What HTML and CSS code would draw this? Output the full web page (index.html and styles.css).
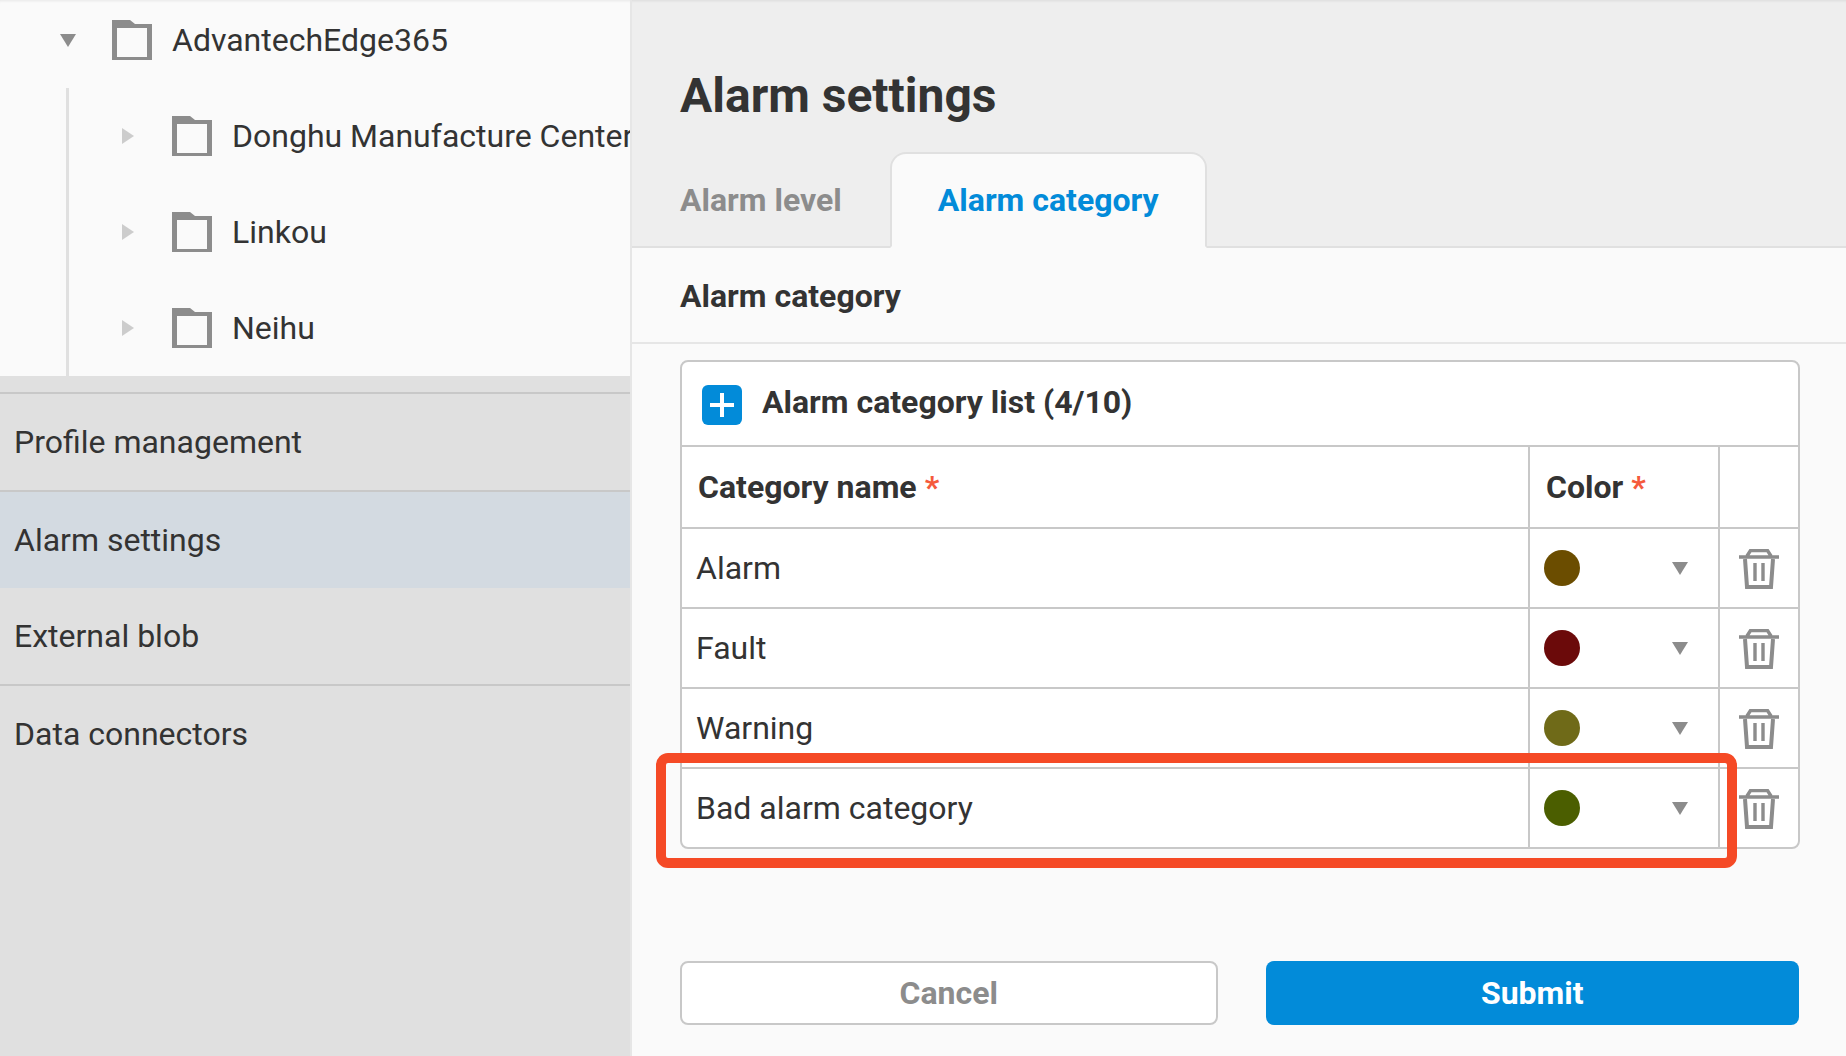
FILE: index.html
```html
<!DOCTYPE html>
<html lang="en">
<head>
  <meta charset="UTF-8" />
  <title>Alarm settings</title>
  <link rel="stylesheet" href="styles.css">
</head>
<body>

  <!-- Sidebar -->
  <aside class="sidebar">
    <div class="tree">
      <div class="tree-row root">
        <span class="caret-down"></span>
        <svg class="folder" viewBox="0 0 40 40"><path d="M0 0h18l5 4h17v36H0zM5 8v29h30V8z" fill="#8c8c8c" fill-rule="evenodd"/></svg>
        <span class="tree-label">AdvantechEdge365</span>
      </div>
      <div class="tree-children">
        <div class="tree-row">
          <span class="caret-right"></span>
          <svg class="folder" viewBox="0 0 40 40"><path d="M0 0h18l5 4h17v36H0zM5 8v29h30V8z" fill="#8c8c8c" fill-rule="evenodd"/></svg>
          <span class="tree-label">Donghu Manufacture Center</span>
        </div>
        <div class="tree-row">
          <span class="caret-right"></span>
          <svg class="folder" viewBox="0 0 40 40"><path d="M0 0h18l5 4h17v36H0zM5 8v29h30V8z" fill="#8c8c8c" fill-rule="evenodd"/></svg>
          <span class="tree-label">Linkou</span>
        </div>
        <div class="tree-row">
          <span class="caret-right"></span>
          <svg class="folder" viewBox="0 0 40 40"><path d="M0 0h18l5 4h17v36H0zM5 8v29h30V8z" fill="#8c8c8c" fill-rule="evenodd"/></svg>
          <span class="tree-label">Neihu</span>
        </div>
      </div>
    </div>
    <nav class="side-nav">
      <a class="nav-item">Profile management</a>
      <a class="nav-item active">Alarm settings</a>
      <a class="nav-item">External blob</a>
      <a class="nav-item">Data connectors</a>
    </nav>
  </aside>

  <!-- Main panel -->
  <main class="panel">
    <header class="panel-head">
      <h1>Alarm settings</h1>
      <div class="tabs">
        <button class="tab">Alarm level</button>
        <button class="tab active">Alarm category</button>
      </div>
    </header>

    <h2 class="section-title">Alarm category</h2>

    <section class="list-card">
      <div class="list-head">
        <span class="add-btn">
          <svg viewBox="0 0 40 40"><path d="M8 20h24M20 8v24" stroke="#fff" stroke-width="4"/></svg>
        </span>
        <span class="list-title">Alarm category list (4/10)</span>
      </div>
      <div class="row head-row">
        <div class="cell name">Category name <em>*</em></div>
        <div class="cell color">Color <em>*</em></div>
        <div class="cell action"></div>
      </div>
      <div class="row">
        <div class="cell name">Alarm</div>
        <div class="cell color"><span class="dot dot-alarm"></span><span class="caret-down"></span></div>
        <div class="cell action"><svg class="trash" viewBox="0 0 40 40"><path d="M0 8h40M8 7l3.5-5.5h17L32 7" fill="none" stroke="#8c8c8c" stroke-width="3.4"/><path d="M6 10l2 28h24l2-28" fill="none" stroke="#8c8c8c" stroke-width="4"/><path d="M16 14v18M24 14v18" stroke="#8c8c8c" stroke-width="3.4"/></svg></div>
      </div>
      <div class="row">
        <div class="cell name">Fault</div>
        <div class="cell color"><span class="dot dot-fault"></span><span class="caret-down"></span></div>
        <div class="cell action"><svg class="trash" viewBox="0 0 40 40"><path d="M0 8h40M8 7l3.5-5.5h17L32 7" fill="none" stroke="#8c8c8c" stroke-width="3.4"/><path d="M6 10l2 28h24l2-28" fill="none" stroke="#8c8c8c" stroke-width="4"/><path d="M16 14v18M24 14v18" stroke="#8c8c8c" stroke-width="3.4"/></svg></div>
      </div>
      <div class="row">
        <div class="cell name">Warning</div>
        <div class="cell color"><span class="dot dot-warning"></span><span class="caret-down"></span></div>
        <div class="cell action"><svg class="trash" viewBox="0 0 40 40"><path d="M0 8h40M8 7l3.5-5.5h17L32 7" fill="none" stroke="#8c8c8c" stroke-width="3.4"/><path d="M6 10l2 28h24l2-28" fill="none" stroke="#8c8c8c" stroke-width="4"/><path d="M16 14v18M24 14v18" stroke="#8c8c8c" stroke-width="3.4"/></svg></div>
      </div>
      <div class="row">
        <div class="cell name">Bad alarm category</div>
        <div class="cell color"><span class="dot dot-bad"></span><span class="caret-down"></span></div>
        <div class="cell action"><svg class="trash" viewBox="0 0 40 40"><path d="M0 8h40M8 7l3.5-5.5h17L32 7" fill="none" stroke="#8c8c8c" stroke-width="3.4"/><path d="M6 10l2 28h24l2-28" fill="none" stroke="#8c8c8c" stroke-width="4"/><path d="M16 14v18M24 14v18" stroke="#8c8c8c" stroke-width="3.4"/></svg></div>
      </div>
      <div class="highlight"></div>
    </section>

    <div class="actions">
      <button class="btn cancel">Cancel</button>
      <button class="btn submit">Submit</button>
    </div>
  </main>

</body>
</html>
```

FILE: styles.css
```css
/* --- BASE --- */
* { margin: 0; padding: 0; box-sizing: border-box; }
html, body { height: 100%; overflow: hidden; }
body {
  display: flex;
  background: #fafafa;
  color: #333;
  font-family: Roboto, "Liberation Sans", sans-serif;
  font-size: 32px;
}

/* Sidebar */
.sidebar {
  width: 632px;
  height: 1056px;
  flex-shrink: 0;
  background: #e0e0e0;
  border-right: 2px solid #e6e6e6;
  overflow: hidden;
}
.tree {
  background: #fafafa;
  height: 376px;
  box-shadow: inset 0 3px 3px -2px rgba(0,0,0,0.08);
}
.tree-row {
  display: flex;
  align-items: center;
  height: 96px;
  white-space: nowrap;
}
.tree-row.root {
  height: 80px;
  padding-left: 60px;
}
.tree-children {
  margin: 8px 0 0 66px;
  padding-left: 53px;
  height: 288px;
  border-left: 3px solid #e0e0e0;
}
.folder {
  width: 40px;
  height: 40px;
  flex-shrink: 0;
}
.root .folder { margin-left: 36px; }
.tree-children .folder { margin-left: 38px; }
.tree-label { margin-left: 20px; }
.caret-down {
  width: 0;
  height: 0;
  border-left: 8px solid transparent;
  border-right: 8px solid transparent;
  border-top: 13px solid #8c8c8c;
  display: inline-block;
}
.caret-right {
  width: 0;
  height: 0;
  border-top: 8px solid transparent;
  border-bottom: 8px solid transparent;
  border-left: 12px solid #cccccc;
  display: inline-block;
}
.side-nav { padding-top: 16px; }
.nav-item {
  display: flex;
  align-items: center;
  height: 98px;
  padding-left: 14px;
  border-top: 2px solid #c8c8c8;
}
.nav-item.active { background: #d3dae1; }
.nav-item.active + .nav-item { border-top: 0; height: 96px; }

/* Main panel */
.panel { flex: 1; min-width: 0; }
.panel-head {
  background: #eeeeee;
  height: 248px;
  padding: 68px 0 0 48px;
  border-bottom: 2px solid #e0e0e0;
  position: relative;
  box-shadow: inset 0 3px 3px -2px rgba(0,0,0,0.08);
}
h1 { font-size: 48px; font-weight: 700; line-height: 56px; }
.tabs { display: flex; position: absolute; left: 0; bottom: -2px; }
.tab {
  font: 700 32px Roboto, sans-serif;
  color: #8c8c8c;
  background: none;
  border: 2px solid transparent;
  height: 96px;
  padding: 0 46px;
}
.tab.active {
  color: #028bd9;
  background: #fafafa;
  border-color: #e0e0e0;
  border-bottom-color: #fafafa;
  border-radius: 16px 16px 0 0;
}
.section-title {
  font-size: 32px;
  font-weight: 700;
  height: 96px;
  line-height: 96px;
  padding-left: 48px;
  border-bottom: 2px solid #e6e6e6;
}
.list-card {
  position: relative;
  margin: 16px 46px 0 48px;
  background: #fff;
  border: 2px solid #c8c8c8;
  border-radius: 8px;
}
.list-head {
  display: flex;
  align-items: center;
  height: 83px;
  padding: 3px 0 0 20px;
  gap: 20px;
  font-weight: 700;
}
.list-title { margin-bottom: 7px; }
.add-btn {
  width: 40px;
  height: 40px;
  background: #028bd9;
  border-radius: 6px;
}
.add-btn svg { display: block; }
.row {
  display: grid;
  grid-template-columns: 846px 190px 1fr;
  height: 80px;
  border-top: 2px solid #c8c8c8;
}
.cell {
  display: flex;
  align-items: center;
  padding-left: 14px;
}
.head-row { font-weight: 700; height: 82px; }
.head-row .name { padding-left: 16px; }
.cell em { color: #f55a3c; font-style: normal; margin-left: 8px; }
.cell.color { border-left: 2px solid #c8c8c8; padding: 0 30px 0 14px; justify-content: space-between; }
.head-row .cell.color { justify-content: flex-start; padding-left: 16px; }
.cell.action { border-left: 2px solid #c8c8c8; padding: 2px 0 0 19px; }
.dot { width: 36px; height: 36px; border-radius: 50%; }
.dot-alarm { background: #6b4d00; }
.dot-fault { background: #6b0a0a; }
.dot-warning { background: #6f6a18; }
.dot-bad { background: #4b5e00; }
.trash { width: 40px; height: 40px; }
.highlight {
  position: absolute;
  left: -26px;
  bottom: -21px;
  width: 1081px;
  height: 115px;
  border: 10px solid #f54a26;
  border-radius: 12px;
}
.actions {
  display: flex;
  gap: 48px;
  margin: 112px 47px 0 48px;
}
.btn {
  flex: 1;
  height: 64px;
  font: 700 32px Roboto, sans-serif;
  border-radius: 8px;
}
.cancel { background: #fff; color: #8c8c8c; border: 2px solid #c8c8c8; }
.submit { background: #028bd9; color: #fff; border: 0; }
```
